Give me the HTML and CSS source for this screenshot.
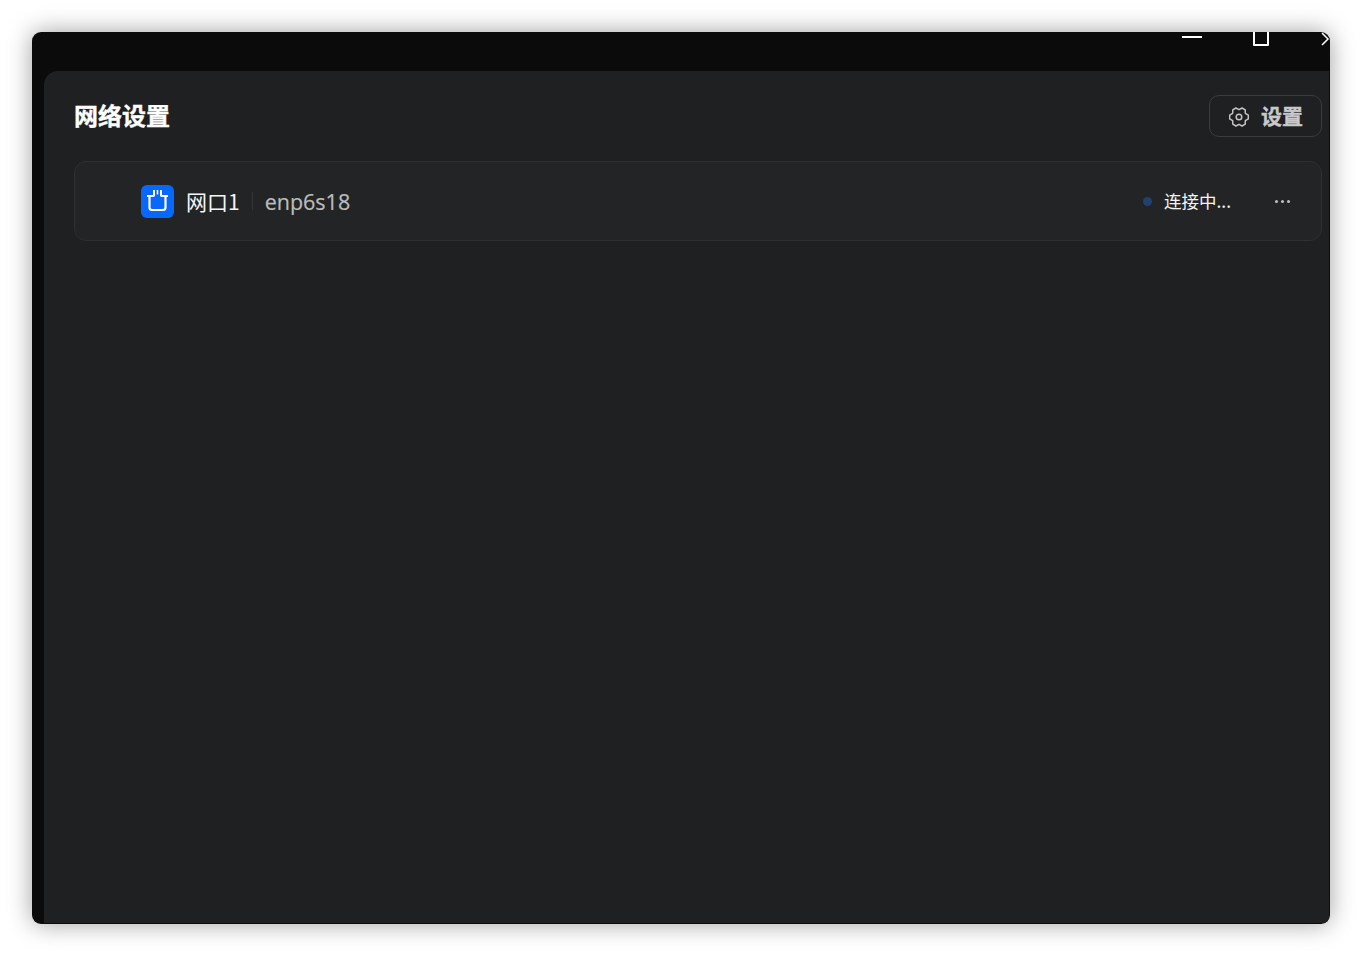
FILE: index.html
```html
<!DOCTYPE html>
<html lang="zh-CN">
<head>
<meta charset="utf-8">
<title>网络设置</title>
<link rel="stylesheet" href="styles.css">
</head>
<body>
<div class="window">
  <header class="titlebar">
    <div class="winctl">
      <span class="ctl-min"></span>
      <span class="ctl-max"></span>
      <svg class="ctl-close" width="12" height="16" viewBox="0 0 12 16"><path d="M1 1 L7 7 L1 13" fill="none" stroke="#fff" stroke-width="1.5"/></svg>
    </div>
  </header>
  <main class="panel">
    <div class="head">
      <h1 class="title">网络设置</h1>
      <button class="btn">
        <svg class="gear" width="20" height="20" viewBox="0 0 20 20" fill="none" stroke="#c4c4c4" stroke-width="1.5" stroke-linejoin="round"><path d="M19.33 8.19V11.81L16.32 13.65 16.23 17.17 13.09 18.98 10 17.3 6.91 18.98 3.77 17.17 3.68 13.65 .67 11.81V8.19L3.68 6.35 3.77 2.83 6.91 1.02 10 2.700 13.09 1.02 16.23 2.83 16.32 6.35Z"/><circle cx="10" cy="10" r="2.8"/></svg>
        <span class="btn-label">设置</span>
      </button>
    </div>
    <section class="row">
      <div class="icon">
        <svg width="33" height="33" viewBox="0 0 33 33" fill="none" stroke="#fff"><path stroke-width="2.200" d="M8.500 11v11.500a2.500 2.500 0 0 0 2.500 2.500h11a2.500 2.500 0 0 0 2.500-2.500V11"/><path stroke-width="2.200" d="M6 11h7.500M19.500 11H27"/><path stroke-width="2" d="M13 5v6M20 5v6"/><path stroke-width="1.600" d="M16.500 5v4.500"/></svg>
      </div>
      <span class="name">网口1</span>
      <span class="sep"></span>
      <span class="dev">enp6s18</span>
      <span class="dot"></span>
      <span class="status">连接中...</span>
      <span class="more"><i></i><i></i><i></i></span>
    </section>
  </main>
</div>
</body>
</html>
```
FILE: styles.css
```css
* { box-sizing: border-box; }
html, body { margin: 0; height: 100%; background: #fff; }
body {
  padding: 32px;
  font-family: "Noto Sans CJK SC", "Noto Sans", sans-serif;
  overflow: hidden;
}
.window {
  width: 1298px;
  height: 892px;
  background: #0b0b0b;
  border-radius: 9px;
  box-shadow: 0 0 24px rgba(0, 0, 0, .38);
  overflow: hidden;
  display: flex;
  flex-direction: column;
  padding-bottom: 1px;
  padding-right: 1px;
}
.titlebar {
  height: 39px;
  flex: none;
  position: relative;
}
.winctl { position: absolute; inset: 0; }
.ctl-min { position: absolute; left: 1150px; top: 4px; width: 20px; height: 2px; background: #fff; }
.ctl-max { position: absolute; left: 1221px; top: -4px; width: 16px; height: 18px; border: 2px solid #fff; border-radius: 1px; }
.ctl-close { position: absolute; left: 1289px; top: 0; }
.panel {
  flex: 1;
  margin-left: 12px;
  background: #1f2022;
  border-top-left-radius: 14px;
  padding: 24px 7px 0 30px;
}
.head {
  display: flex;
  justify-content: space-between;
  align-items: center;
  height: 42px;
}
.title {
  margin: 0 0 2px;
  font-size: 24px;
  font-weight: 700;
  color: #fff;
  line-height: 32px;
  -webkit-text-stroke: .4px #fff;
}
.btn {
  width: 113px;
  height: 42px;
  display: flex;
  align-items: center;
  gap: 12px;
  padding: 0 0 0 19px;
  background: transparent;
  border: 1px solid #3b3c3e;
  border-radius: 10px;
  color: #c9c9c9;
  font: 700 21px "Noto Sans CJK SC", sans-serif;
}
.btn-label {
  margin-bottom: 2px;
  -webkit-text-stroke: .4px #c9c9c9;
}
.gear { flex: none; margin-top: 1px; }
.row {
  margin-top: 24px;
  height: 80px;
  display: flex;
  align-items: center;
  padding: 0 31px 0 66px;
  background: #232426;
  border: 1px solid #2e2f31;
  border-radius: 12px;
}
.icon {
  width: 33px;
  height: 33px;
  flex: none;
  background: #0768fd;
  border-radius: 6px;
  display: flex;
}
.name {
  margin-left: 12px;
  font-size: 21px;
  color: #f5f5f5;
  line-height: 28px;
}
.sep {
  width: 1px;
  height: 18px;
  margin: 0 12px;
  background: #333436;
}
.dev {
  font: 21.5px "Open Sans", "Noto Sans", sans-serif;
  color: #bcbcbc;
  -webkit-text-stroke: .2px #bcbcbc;
}
.dot {
  margin-left: auto;
  width: 9px;
  height: 9px;
  border-radius: 50%;
  background: #23416f;
}
.status {
  margin: 0 0 2px 12px;
  width: 68px;
  font-size: 17.5px;
  color: #f5f5f5;
  white-space: nowrap;
}
.more {
  margin-left: 43px;
  display: flex;
  gap: 3px;
}
.more i {
  width: 3px;
  height: 3px;
  border-radius: 50%;
  background: #c0c0c0;
}
```
